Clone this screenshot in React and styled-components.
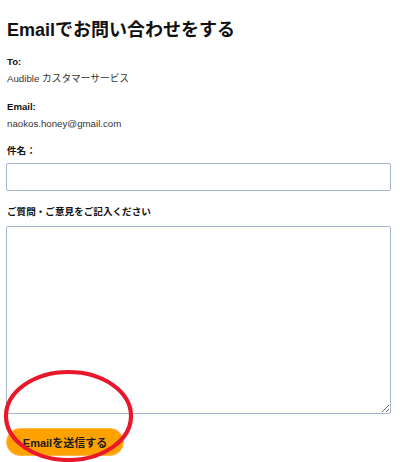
import styled, { createGlobalStyle } from "styled-components";

const GlobalStyle = createGlobalStyle`
  html, body {
    margin: 0;
    padding: 0;
    background: #ffffff;
  }
  body {
    font-family: "Liberation Sans", "Noto Sans CJK JP", sans-serif;
    color: #111111;
  }
`;

const Page = styled.main`
  position: relative;
  width: 400px;
  height: 462px;
  overflow: hidden;
  box-sizing: border-box;
  padding: 19px 9px 0 6px;
`;

const Title = styled.h1`
  margin: 0 0 0 1px;
  font-size: 18px;
  line-height: 22px;
  font-weight: 700;
  color: #111111;
`;

const Field = styled.section`
  display: flex;
  flex-direction: column;
  margin-top: ${(p) => p.$top}px;
`;

const Label = styled.label`
  margin-left: 1px;
  font-size: 9.6px;
  line-height: 14px;
  font-weight: 700;
  color: #111111;
`;

const Value = styled.span`
  margin-top: 3px;
  margin-left: 1px;
  font-size: 9.7px;
  line-height: 14px;
  color: #333333;
`;

const TextInput = styled.input`
  box-sizing: border-box;
  margin: ${(p) => p.$gap}px 0 0;
  width: 100%;
  height: 28px;
  border: 1px solid #a7b6cf;
  border-radius: 2px;
  padding: 0 6px;
  font: inherit;
  background: #ffffff;
  outline: none;
`;

const TextArea = styled.textarea`
  box-sizing: border-box;
  margin: ${(p) => p.$gap}px 0 0;
  width: 100%;
  height: 188px;
  border: 1px solid #a7b6cf;
  border-radius: 2px;
  padding: 6px;
  font: inherit;
  background: #ffffff;
  outline: none;
  display: block;
`;

const SubmitButton = styled.button`
  margin-top: 14px;
  width: 118px;
  height: 28px;
  border: 1px solid #ffb84a;
  border-radius: 14px;
  background: #ffa200;
  color: #1a1a1a;
  font-family: "Liberation Sans", "Noto Sans CJK JP", sans-serif;
  font-size: 11px;
  font-weight: 700;
  padding: 0;
  cursor: pointer;
`;

const Annotation = styled.svg`
  position: absolute;
  left: 0;
  top: 366px;
  pointer-events: none;
`;

const App = () => (
  <>
    <GlobalStyle />
    <Page>
      <Title>Emailでお問い合わせをする</Title>

      <Field $top={14}>
        <Label>To:</Label>
        <Value>Audible カスタマーサービス</Value>
      </Field>

      <Field $top={14}>
        <Label>Email:</Label>
        <Value>naokos.honey@gmail.com</Value>
      </Field>

      <Field $top={13}>
        <Label htmlFor="subject">件名：</Label>
        <TextInput id="subject" type="text" $gap={5} />
      </Field>

      <Field $top={14}>
        <Label htmlFor="message">ご質問・ご意見をご記入ください</Label>
        <TextArea id="message" $gap={7} />
      </Field>

      <SubmitButton type="button">Emailを送信する</SubmitButton>

      <Annotation width="140" height="100" viewBox="0 0 140 100">
        <ellipse
          cx="68.5"
          cy="50"
          rx="62.5"
          ry="44"
          fill="none"
          stroke="#e8182a"
          strokeWidth="4.2"
        />
      </Annotation>
    </Page>
  </>
);

export default App;
